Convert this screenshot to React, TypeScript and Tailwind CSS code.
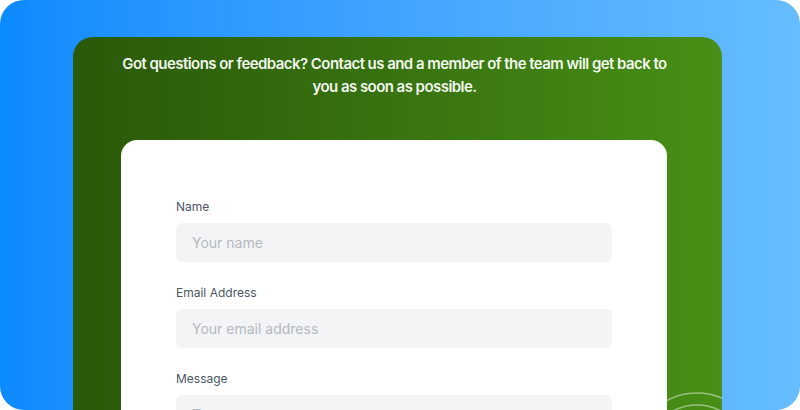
import React from "react";

function Field({ label, placeholder }: { label: string; placeholder: string }) {
  return (
    <div className="flex flex-col">
      <div className="text-[12px] leading-[18px] text-[#4b5563] mb-[7px]">{label}</div>
      <div className="h-[39px] rounded-[6px] bg-[#f3f4f6] flex items-center pl-[16px] text-[14px] text-[#b4b9c0]">
        {placeholder}
      </div>
    </div>
  );
}

export default function App() {
  return (
    <div
      className="w-[800px] h-[410px] rounded-[24px] overflow-hidden bg-linear-to-r from-[#0a8aff] to-[#66bdff] pt-[37px]"
      style={{ fontFamily: "Inter, 'Noto Sans', sans-serif" }}
    >
      <div className="relative ml-[73px] w-[649px] h-[420px] rounded-[20px] overflow-hidden bg-linear-to-r from-[#2a5909] to-[#478f16] pt-[15px]">
        <svg className="absolute inset-0 w-full h-full pointer-events-none" viewBox="0 0 649 420">
          <circle cx="624" cy="418" r="62" fill="none" stroke="rgba(255,255,255,0.45)" strokeWidth="1.5" />
          <circle cx="624" cy="418" r="50" fill="none" stroke="rgba(255,255,255,0.45)" strokeWidth="1.5" />
        </svg>
        <p className="relative text-center text-white/95 text-[15px] leading-[23px] font-semibold tracking-[-0.55px] px-[30px] ml-[-6px]">
          Got questions or feedback? Contact us and a member of the team will get back to
          <br />
          you as soon as possible.
        </p>
        <div className="relative ml-[48px] w-[546px] mt-[42px] rounded-[16px] bg-white pt-[58px] px-[55px] flex flex-col gap-[22px]">
          <Field label="Name" placeholder="Your name" />
          <Field label="Email Address" placeholder="Your email address" />
          <Field label="Message" placeholder="Type your message" />
        </div>
      </div>
    </div>
  );
}
